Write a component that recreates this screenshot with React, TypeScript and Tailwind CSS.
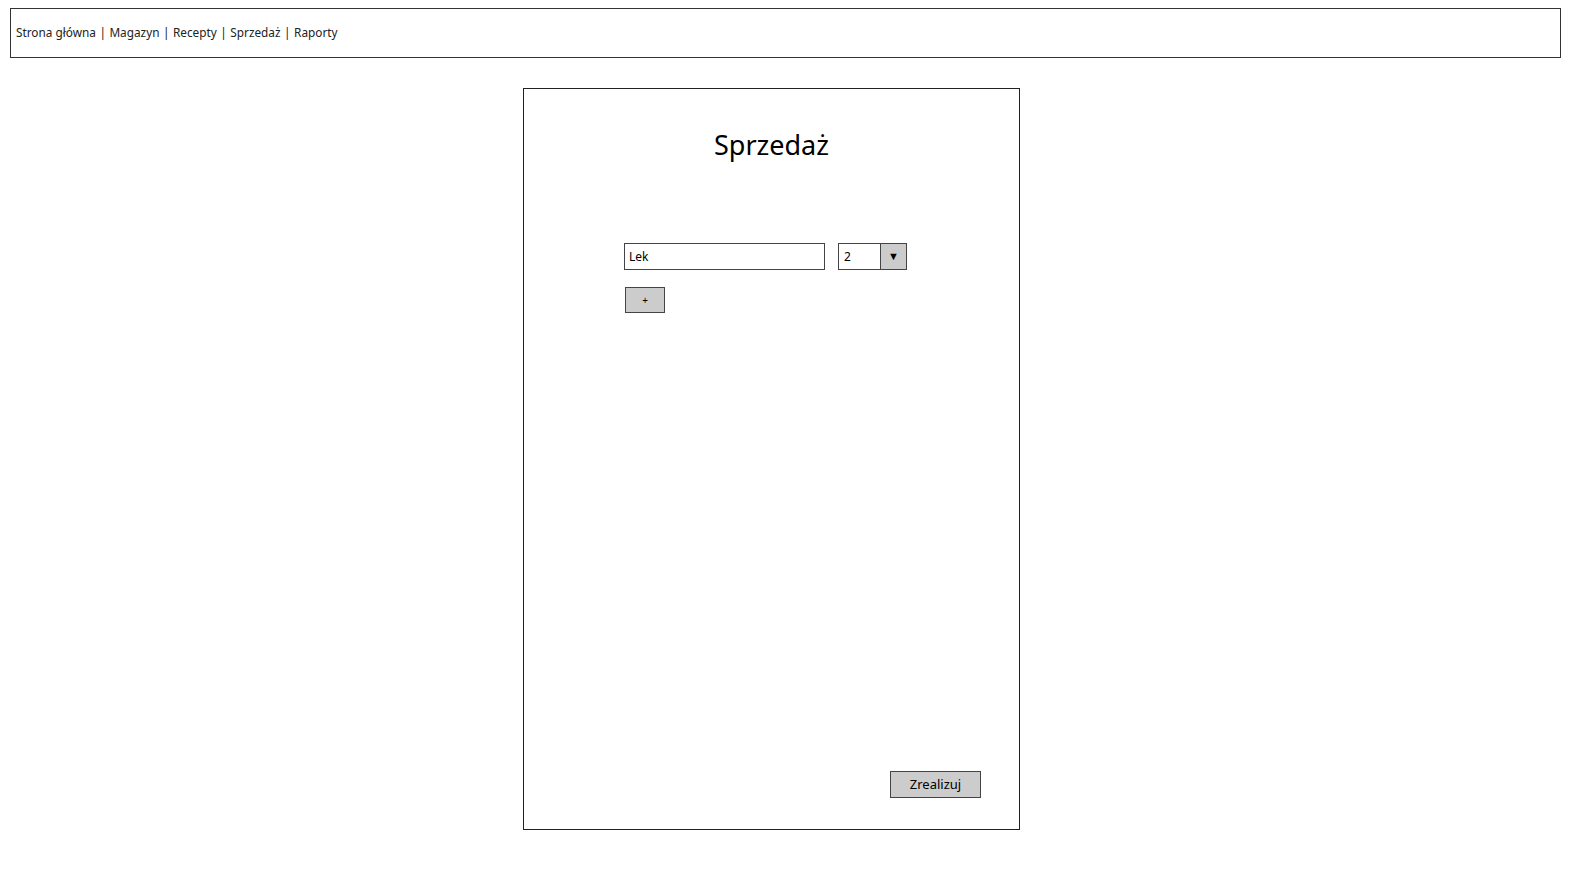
import React from "react";

const font = { fontFamily: '"Comic Sans MS", "Noto Sans", sans-serif' };

export default function App() {
    const links = ["Strona główna", "Magazyn", "Recepty", "Sprzedaż", "Raporty"];

    return (
        <div className="bg-white w-[1572px] h-[875px] pt-[8px] text-black" style={font}>
            <div className="ml-[10px] w-[1551px] h-[50px] border border-[#333] flex items-center px-[5px] text-[11.8px] text-[#222]">
                {links.map((l, i) => (
                    <span key={l}>
                        {i > 0 && <span className="mx-[3.5px]">|</span>}
                        {l}
                    </span>
                ))}
            </div>

            <div className="ml-[523px] mt-[30px] w-[497px] h-[742px] border border-[#222] flex flex-col relative">
                <div className="text-center text-[27px] mt-[36px] leading-[40px]">Sprzedaż</div>

                <div className="flex flex-row items-center mt-[78px] pl-[100px] gap-[13px]">
                    <div className="w-[201px] h-[27px] border border-[#444] flex items-center px-[4px] text-[12px]">Lek</div>
                    <div className="w-[69px] h-[27px] border border-[#444] flex flex-row text-[12px]">
                        <div className="flex-1 flex items-center px-[5px]">2</div>
                        <div className="w-[26px] bg-[#cccccc] border-l border-[#444] flex items-center justify-center text-[11px]">▼</div>
                    </div>
                </div>

                <div className="pl-[101px] mt-[17px]">
                    <button className="w-[40px] h-[26px] bg-[#cccccc] border border-[#444] text-[10px] flex items-center justify-center">+</button>
                </div>

                <div className="mt-auto mb-[31px] flex justify-end pr-[38px]">
                    <button className="w-[91px] h-[27px] bg-[#cccccc] border border-[#444] text-[13px] flex items-center justify-center">Zrealizuj</button>
                </div>
            </div>
        </div>
    );
}
